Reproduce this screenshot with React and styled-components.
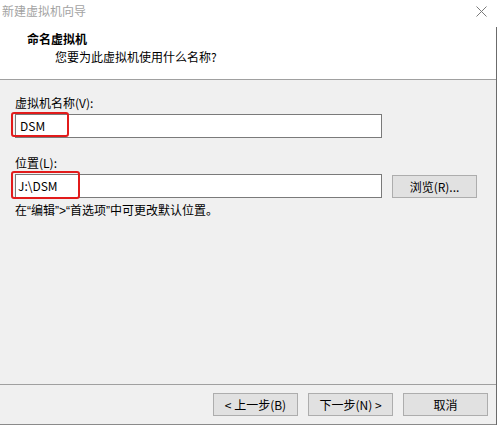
import React from "react";
import styled, { createGlobalStyle } from "styled-components";

const Global = createGlobalStyle`
  html, body { margin: 0; padding: 0; background: #f0f0f0; }
  body { font-family: "Noto Sans CJK SC", "Microsoft YaHei", sans-serif; font-size: 12px; color: #000; }
  * { box-sizing: border-box; }
`;

const Window = styled.div`
  position: relative;
  width: 497px;
  height: 425px;
  display: flex;
  flex-direction: column;
  background: #f0f0f0;
  overflow: hidden;
  &::after {
    content: "";
    position: absolute;
    right: 0;
    top: 27px;
    bottom: 0;
    width: 1px;
    background: #6b6b6b;
  }
`;

const Header = styled.div`
  height: 80px;
  flex: none;
  background: #fff;
  border-bottom: 1px solid #a0a0a0;
  position: relative;
`;

const TitleBar = styled.div`
  display: flex;
  justify-content: space-between;
  align-items: flex-start;
  padding: 2px 10px 0 2px;
  height: 31px;
`;

const TitleText = styled.div`
  line-height: 18px;
  color: #a3a3a3;
  font-size: 12px;
`;

const CloseIcon = styled.svg`
  margin-top: 4px;
  width: 11px;
  height: 11px;
`;

const Heading = styled.div`
  padding-left: 27px;
  font-weight: bold;
  line-height: 16px;
  height: 18px;
`;

const SubHeading = styled.div`
  padding-left: 55px;
  line-height: 16px;
`;

const Body = styled.div`
  flex: 1;
  padding: 15px 0 0 15px;
  display: flex;
  flex-direction: column;
`;

const Label = styled.div`
  line-height: 16px;
  margin-top: ${(p) => p.$mt || 0}px;
`;

const FieldRow = styled.div`
  display: flex;
  align-items: flex-start;
  margin-top: 3px;
`;

const InputBox = styled.div`
  position: relative;
  width: 367px;
  height: 24px;
  border: 1px solid #7a7a7a;
  background: #fff;
  display: flex;
  align-items: center;
  padding-left: ${(p) => p.$pl}px;
  line-height: 16px;
`;

const Highlight = styled.div`
  position: absolute;
  left: -5px;
  top: ${(p) => p.$top}px;
  width: ${(p) => p.$w}px;
  height: ${(p) => p.$h}px;
  border: 2px solid #e21b1b;
  border-radius: 3px;
`;

const Button = styled.button`
  width: 85px;
  height: 23px;
  margin-left: ${(p) => p.$ml || 0}px;
  margin-top: ${(p) => p.$mt || 0}px;
  background: #e1e1e1;
  border: 1px solid #adadad;
  font-family: inherit;
  font-size: 12px;
  color: #000;
  padding: 0;
  line-height: 16px;
`;

const Hint = styled.div`
  font-family: "Liberation Sans", "Noto Sans CJK SC", sans-serif;
  line-height: 16px;
  margin-top: 5px;
`;

const Footer = styled.div`
  height: 41px;
  flex: none;
  border-top: 1px solid #a0a0a0;
  border-bottom: 1px solid #8a8a8a;
  display: flex;
  justify-content: flex-end;
  align-items: flex-start;
  gap: 10px;
  padding: 8px 9px 0 0;
`;

export default function App() {
  return (
    <>
      <Global />
      <Window>
        <Header>
          <TitleBar>
            <TitleText>新建虚拟机向导</TitleText>
            <CloseIcon viewBox="0 0 11 11">
              <path d="M0.5 0.5 L10.5 10.5 M10.5 0.5 L0.5 10.5" stroke="#7a7a7a" strokeWidth="1" fill="none" />
            </CloseIcon>
          </TitleBar>
          <Heading>命名虚拟机</Heading>
          <SubHeading>您要为此虚拟机使用什么名称?</SubHeading>
        </Header>
        <Body>
          <Label>虚拟机名称(V):</Label>
          <FieldRow>
            <InputBox $pl={4}>
              DSM
              <Highlight $top={-3} $w={58} $h={25} />
            </InputBox>
          </FieldRow>
          <Label $mt={17}>位置(L):</Label>
          <FieldRow>
            <InputBox $pl={2}>
              J:\DSM
              <Highlight $top={-4} $w={69} $h={28} />
            </InputBox>
            <Button $ml={10} $mt={1}>浏览(R)...</Button>
          </FieldRow>
          <Hint>在“编辑”&gt;“首选项”中可更改默认位置。</Hint>
        </Body>
        <Footer>
          <Button>&lt; 上一步(B)</Button>
          <Button>下一步(N) &gt;</Button>
          <Button>取消</Button>
        </Footer>
      </Window>
    </>
  );
}
